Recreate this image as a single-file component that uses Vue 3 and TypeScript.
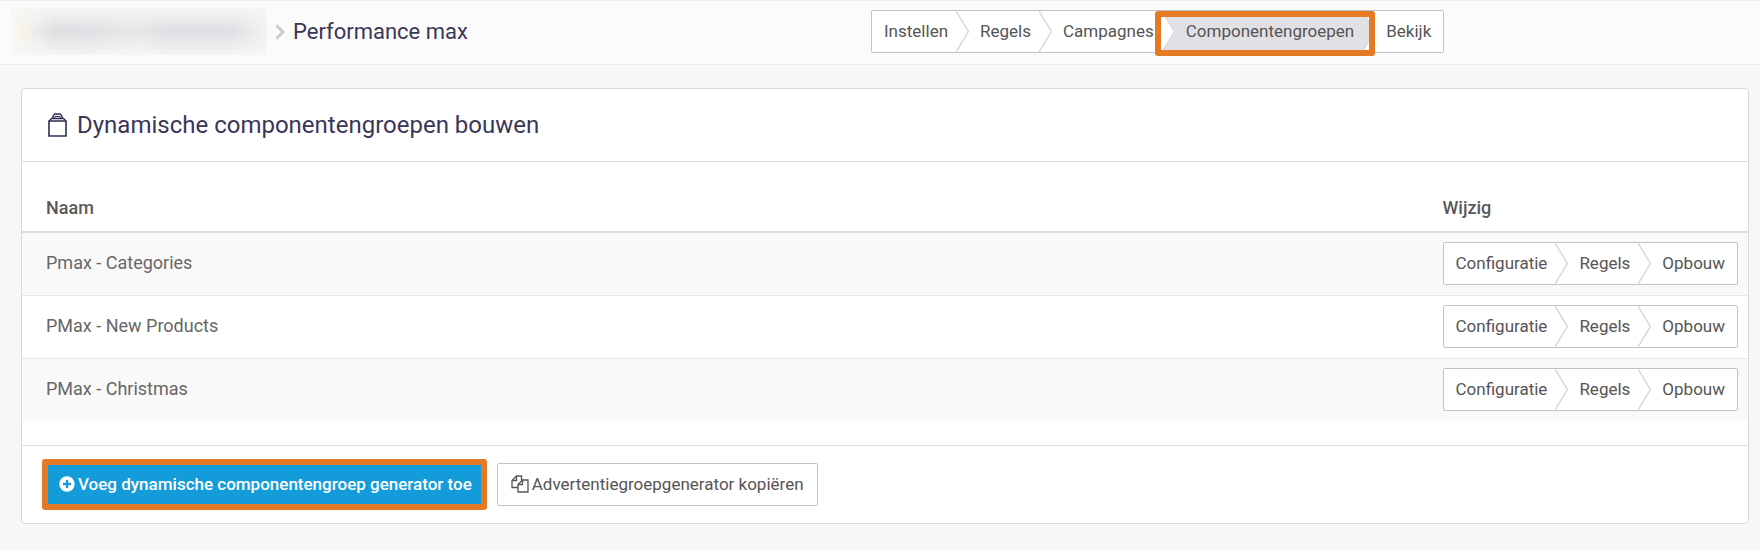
<script setup lang="ts">
interface Step {
  label: string
  active?: boolean
}

const campaignSteps: Step[] = [
  { label: 'Instellen' },
  { label: 'Regels' },
  { label: 'Campagnes' },
  { label: 'Componentengroepen', active: true },
  { label: 'Bekijk' },
]

const rowSteps: Step[] = [{ label: 'Configuratie' }, { label: 'Regels' }, { label: 'Opbouw' }]

const groups: string[] = ['Pmax - Categories', 'PMax - New Products', 'PMax - Christmas']
</script>

<template>
  <div class="page">
    <header class="topbar">
      <div class="crumbs">
        <div class="redacted" aria-hidden="true"></div>
        <svg class="crumb-arrow" width="10" height="16" viewBox="0 0 10 16" aria-hidden="true">
          <path d="M1.500 1.500 L8 8 L1.500 14.500" fill="none" stroke="#cccccc" stroke-width="3" />
        </svg>
        <span class="crumb">Performance max</span>
      </div>
      <nav>
        <ul class="steps">
          <li v-for="(step, i) in campaignSteps" :key="step.label" :class="{ active: step.active }">
            <svg v-if="i > 0" class="chevron" width="13" height="41" viewBox="0 0 13 41" aria-hidden="true">
              <path d="M0 0 L12.5 20.5 L0 41 Z" :fill="campaignSteps[i - 1].active ? '#e1e0e5' : '#ffffff'" />
              <path d="M0 0 L12.5 20.5 L0 41" fill="none" stroke="#d9d8e0" stroke-width="1.5" />
            </svg>
            <button type="button">{{ step.label }}</button>
          </li>
        </ul>
      </nav>
    </header>

    <main class="card">
      <h1>
        <svg width="19" height="24" viewBox="0 0 19 24" fill="none" stroke="#2f2b4f" aria-hidden="true">
          <path d="M1 8 H18 V23 H1 Z" stroke-width="1.600" />
          <path d="M1.500 7.500 L3.500 5.500 H15.500 L17.500 7.500" stroke-width="1.300" />
          <path d="M4.500 6 C5 2.500 6 1 7.500 1 H11.500 C13 1 14 2.500 14.500 6" stroke-width="1.500" />
          <path d="M6.500 5.500 L7 3.500 H12 L12.500 5.500" stroke-width="1" />
        </svg>
        Dynamische componentengroepen bouwen
      </h1>

      <div class="table-wrap">
        <table>
          <thead>
            <tr>
              <th scope="col">Naam</th>
              <th scope="col" class="edit">Wijzig</th>
            </tr>
          </thead>
          <tbody>
            <tr v-for="group in groups" :key="group">
              <td>{{ group }}</td>
              <td class="edit">
                <ul class="steps">
                  <li v-for="(step, i) in rowSteps" :key="step.label">
                    <svg v-if="i > 0" class="chevron" width="13" height="41" viewBox="0 0 13 41" aria-hidden="true">
                      <path d="M0 0 L12.5 20.5 L0 41" fill="none" stroke="#d9d8e0" stroke-width="1.5" />
                    </svg>
                    <button type="button">{{ step.label }}</button>
                  </li>
                </ul>
              </td>
            </tr>
          </tbody>
        </table>
      </div>

      <footer>
        <button type="button" class="primary">
          <svg width="16" height="16" viewBox="0 0 16 16" aria-hidden="true">
            <circle cx="8" cy="8" r="7.700" fill="#ffffff" />
            <path d="M8 4 V12 M4 8 H12" stroke="#139bda" stroke-width="2.300" />
          </svg>
          Voeg dynamische componentengroep generator toe
        </button>
        <button type="button" class="secondary">
          <svg width="18" height="18" viewBox="0 0 18 18" fill="none" stroke="#555555" stroke-width="1.300" aria-hidden="true">
            <path d="M7 12.500 H1 V5.500 L5.500 1 H10.500 V5" />
            <path d="M1 5.500 H5.500 V1" />
            <path d="M11.500 5 H17 V17 H7 V9.500 Z" />
            <path d="M7 9.500 H11.500 V5" />
          </svg>
          Advertentiegroepgenerator kopiëren
        </button>
      </footer>
    </main>
  </div>
</template>

<style>
body {
  margin: 0;
  background: #f7f7f7;
}
</style>

<style scoped>
.page {
  font-family: Roboto, 'Liberation Sans', sans-serif;
  font-size: 18px;
  color: #676767;
}

ul {
  list-style: none;
  margin: 0;
  padding: 0;
}

button {
  font: inherit;
  color: inherit;
  margin: 0;
  border: 0;
  background: none;
  cursor: pointer;
}

.topbar {
  display: grid;
  grid-template-columns: 1fr calc(50% + 9px);
  align-items: center;
  box-sizing: border-box;
  height: 65px;
  padding: 0 10px 2px;
  border-top: 1px solid #ececec;
  border-bottom: 1px solid #ececec;
  background: #fbfbfb;
}

.crumbs {
  display: flex;
  align-items: center;
}

.redacted {
  width: 257px;
  height: 47px;
  background:
    linear-gradient(to bottom, rgba(247, 247, 247, 0.9), rgba(247, 247, 247, 0) 50%, rgba(247, 247, 247, 0.9)),
    linear-gradient(to right, #faf9f6, #f4f1e6 6%, #ebebea 11%, #dfdfe2 17%, #dfdfe3 28%, #e7e7e9 50%, #dfdfe3 60%, #dfdfe3 86%, #f2f2f3 100%);
}

.crumb-arrow {
  margin: 0 8px;
}

.crumb {
  font-size: 22px;
  color: #3a3658;
}

.steps {
  display: inline-flex;
  vertical-align: top;
  border: 1px solid #c3c2cb;
  border-radius: 2px;
  background: #ffffff;
  color: #555555;
  font-size: 17px;
}

.steps li {
  position: relative;
  display: flex;
}

.steps button {
  height: 41px;
  padding: 0 8px 2px 11px;
  line-height: 20px;
  white-space: nowrap;
}

.steps li:first-child button {
  padding-left: 12px;
}

.steps li:last-child button {
  padding-right: 12px;
}

.chevron {
  display: block;
}

.steps .active {
  background: #e1e0e5;
}

.active::after {
  content: '';
  position: absolute;
  inset: 0 -13px -4px -7px;
  border: 6px solid #e57a24;
  border-radius: 3px;
  pointer-events: none;
  z-index: 1;
}

.card {
  margin: 23px 11px 25px 21px;
  border: 1px solid #d9d9d9;
  border-radius: 4px;
  background: #ffffff;
}

h1 {
  display: flex;
  align-items: center;
  gap: 10px;
  height: 72px;
  margin: 0;
  padding: 0 26px;
  border-bottom: 1px solid #dedede;
  font-size: 24px;
  font-weight: 400;
  color: #3a3658;
}

.table-wrap {
  padding: 24px 0;
}

table {
  width: 100%;
  border-collapse: collapse;
}

th {
  height: 42px;
  padding: 0 24px 3px;
  border-bottom: 2px solid #dddddd;
  text-align: left;
  font-weight: 500;
  color: #5a5a5a;
}

td {
  padding: 9px 24px 10px;
  border-top: 1px solid #e7e7e7;
  line-height: 41px;
  vertical-align: top;
}

tbody tr:nth-child(odd) {
  background: #f9f9f9;
}

.edit {
  width: 1px;
  padding-left: 10px;
  padding-right: 10px;
}

footer {
  display: flex;
  align-items: center;
  gap: 10px;
  padding: 13px 20px;
  border-top: 1px solid #dedede;
}

footer button {
  display: flex;
  align-items: center;
  gap: 3px;
  font-size: 17px;
  white-space: nowrap;
}

.primary {
  height: 51px;
  padding: 0 9px 2px 11px;
  border: 6px solid #e57a24;
  border-radius: 3px;
  background: #139bda;
  background-clip: padding-box;
  color: #ffffff;
  font-weight: 500;
}

.secondary {
  height: 43px;
  padding: 0 13px 2px;
  border: 1px solid #c3c2cb;
  border-radius: 2px;
  background: #ffffff;
  color: #555555;
}
</style>
